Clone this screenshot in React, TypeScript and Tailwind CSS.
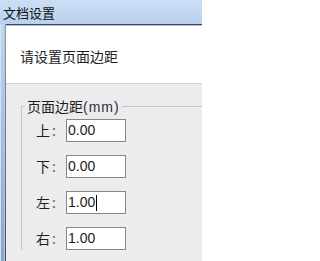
import { ReactNode } from "react";

interface Margin {
  label: string;
  value: string;
  focused?: boolean;
}

const margins: Margin[] = [
  { label: "上", value: "0.00" },
  { label: "下", value: "0.00" },
  { label: "左", value: "1.00", focused: true },
  { label: "右", value: "1.00" },
];

const cjk = "font-['Noto_Sans_CJK_SC','Microsoft_YaHei',sans-serif]";

const MarginField = ({ value, focused }: { value: string; focused?: boolean }) => (
  <div className="flex h-[23px] w-[60px] items-center border border-[#828790] bg-white pl-[1px] font-['Liberation_Sans',Arial,sans-serif] text-[14px] text-[#1a1a1a]">
    <span>{value}</span>
    {focused && <span className="ml-[1px] h-[16px] w-px bg-black" />}
  </div>
);

const Row = ({ children }: { children: ReactNode }) => (
  <div className="flex h-[23px] items-center">{children}</div>
);

export default function App() {
  return (
    <div className={`flex h-[261px] w-[202px] flex-col overflow-hidden bg-[#ececec] ${cjk}`}>
      {/* title bar */}
      <div className="flex h-[24px] shrink-0 items-center bg-gradient-to-b from-[#cadff5] to-[#b9d1ed] pl-[3px] text-[13px] leading-none text-[#111]">
        文档设置
      </div>

      <div className="flex flex-1">
        {/* left window frame */}
        <div className="flex w-[6px] shrink-0">
          <div className="w-px bg-[#d3e2f3]" />
          <div className="w-[3px] bg-gradient-to-b from-[#c1d6ee] to-[#86a5cf]" />
          <div className="w-px bg-[#b3c7df]" />
          <div className="w-px bg-gradient-to-b from-[#8c9bb0] to-[#3e4e66]" />
        </div>

        <div className="flex flex-1 flex-col">
          <div className="h-px bg-[#3a4759]" />
          <div className="h-px bg-[#b4c2d2]" />

          {/* header panel */}
          <div className="h-[58px] border-b border-[#d2d2d2] bg-white pl-[14px] pt-[20px] text-[14px] leading-[20px] text-[#1e1e1e]">
            请设置页面边距
          </div>

          {/* margins group */}
          <fieldset className="ml-[15px] mt-[14px] border-l border-t border-[#b2c9e4]">
            <legend className="ml-[3px] px-[2px] text-[14px] leading-[16px] text-[#1e1e1e]">
              页面边距
              <span className="font-['Liberation_Sans',Arial,sans-serif] tracking-[1px] text-[#2c2c44]">(mm)</span>
            </legend>
            <div className="flex flex-col gap-[13px] pl-[14px] pt-[4px]">
              {margins.map((m) => (
                <Row key={m.label}>
                  <span className="w-[30px] text-[14px] text-[#1e1e1e]">
                    {m.label}
                    <span className="ml-[2px] text-[#666]">:</span>
                  </span>
                  <MarginField value={m.value} focused={m.focused} />
                </Row>
              ))}
            </div>
          </fieldset>
        </div>
      </div>
    </div>
  );
}
